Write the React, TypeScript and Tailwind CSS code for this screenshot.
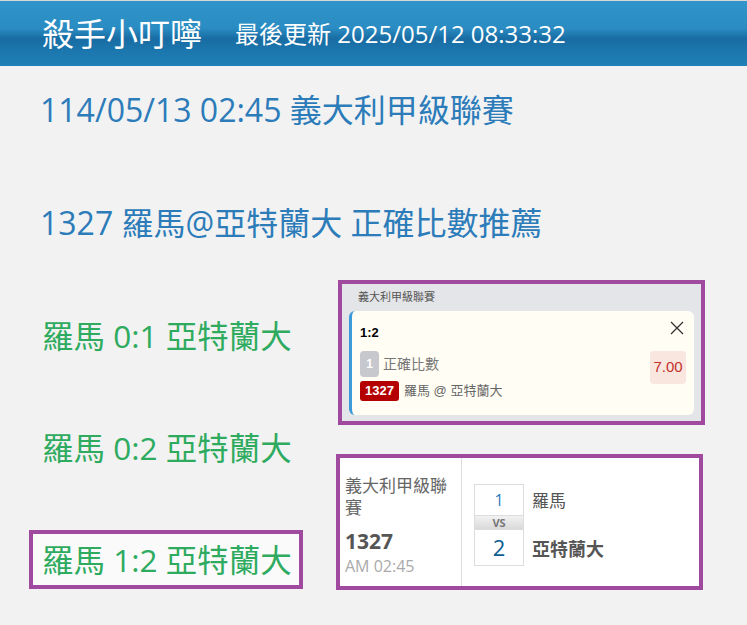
import React from "react";

const sans = { fontFamily: '"Open Sans", "Noto Sans CJK TC", sans-serif' };
const arial = { fontFamily: '"Liberation Sans", "Noto Sans CJK TC", sans-serif' };

function GreenLine({ text, active }: { text: string; active?: boolean }) {
  return (
    <div
      className={
        "h-[59px] flex items-center px-[9px] border-4 text-[31.5px] leading-none text-[#2eab5f] whitespace-nowrap " +
        (active ? "border-[#a04a9f] bg-[#fafafa]" : "border-transparent")
      }
    >
      {text}
    </div>
  );
}

export default function App() {
  return (
    <div className="w-[747px] h-[625px] overflow-hidden bg-[#f2f2f2]" style={sans}>
      <header className="h-[66px] border-t border-[#d8d8d8] bg-[linear-gradient(180deg,#2f95ca_0%,#2a8cc2_42%,#186ca3_58%,#1b76ad_75%,#2080b7_100%)] flex items-center pl-[42px] text-white">
        <div className="text-[32px] leading-none">殺手小叮嚀</div>
        <div className="ml-[33px] text-[24px] leading-none">最後更新 2025/05/12 08:33:32</div>
      </header>

      <div className="pl-[40px] pt-[24px] text-[32px] leading-[40px] text-[#2c7cba] whitespace-nowrap">
        <div>114/05/13 02:45 義大利甲級聯賽</div>
        <div className="mt-[73px]">1327 羅馬@亞特蘭大 正確比數推薦</div>
      </div>

      <div className="mt-[37px] flex items-start">
        <div className="ml-[29px] w-[274px] pt-[26px] flex flex-col gap-[53px]">
          <GreenLine text="羅馬 0:1 亞特蘭大" />
          <GreenLine text="羅馬 0:2 亞特蘭大" />
          <GreenLine text="羅馬 1:2 亞特蘭大" active />
        </div>

        <div className="ml-[33px] flex flex-col">
          {/* Bet slip card */}
          <div className="ml-[2px] w-[367px] h-[145px] border-4 border-[#a04a9f] bg-[#e4e5e8] px-[7px] pt-[6px]" style={arial}>
            <div className="pl-[9px] text-[11px] leading-[14px] text-[#555]">義大利甲級聯賽</div>
            <div className="mt-[7px] h-[104px] rounded-[6px] border-l-[3px] border-[#3b9bda] bg-[#fffdf4] pl-[8px] pr-[8px] pt-[14px] relative">
              <svg
                className="absolute right-[10px] top-[10px]"
                width="14"
                height="14"
                viewBox="0 0 14 14"
                fill="none"
                stroke="#333"
                strokeWidth="1.3"
              >
                <path d="M1 1 L13 13 M13 1 L1 13" />
              </svg>
              <div className="text-[13px] leading-[16px] font-bold text-black">1:2</div>
              <div className="mt-[10px] flex items-start justify-between">
                <div className="flex flex-col">
                  <div className="flex items-center gap-[4px]">
                    <div className="w-[19px] h-[26px] rounded-[4px] bg-[#c7c8cd] flex items-center justify-center text-white text-[12px] font-bold">
                      1
                    </div>
                    <div className="text-[14px] text-[#777]">正確比數</div>
                  </div>
                  <div className="mt-[4px] flex items-center gap-[5px]">
                    <div className="w-[39px] h-[20px] rounded-[3px] bg-[#b50000] flex items-center justify-center text-white text-[13px] font-bold">
                      1327
                    </div>
                    <div className="text-[13px] text-[#666]">羅馬 @ 亞特蘭大</div>
                  </div>
                </div>
                <div className="w-[36px] h-[33px] rounded-[4px] bg-[#f8e6df] flex items-center justify-center text-[15px] text-[#c4302b]">
                  7.00
                </div>
              </div>
            </div>
          </div>

          {/* Match card */}
          <div className="mt-[29px] w-[367px] h-[136px] border-4 border-[#a04a9f] bg-white flex">
            <div className="w-[122px] border-r border-[#ddd] pl-[5px] pr-[6px] pt-[17px]">
              <div className="text-[17px] leading-[22px] text-[#666]">義大利甲級聯賽</div>
              <div className="mt-[10px] text-[21px] leading-[24px] font-bold text-[#555]">1327</div>
              <div className="mt-[3px] text-[16px] leading-[20px] text-[#aaa]">AM 02:45</div>
            </div>
            <div className="flex items-center pl-[12px] pt-[6px]">
              <div className="w-[50px] border border-[#ddd] flex flex-col">
                <div className="h-[30px] flex items-center justify-center text-[16px] text-[#2a7dbc]">1</div>
                <div className="h-[15px] border-y border-[#ddd] bg-[linear-gradient(180deg,#f2f2f2,#d9d9d9)] flex items-center justify-center text-[11px] font-bold text-[#777] leading-none">
                  VS
                </div>
                <div className="h-[35px] flex items-center justify-center text-[22px] text-[#0c5d93]">2</div>
              </div>
              <div className="ml-[8px] flex flex-col">
                <div className="h-[36px] flex items-center text-[17px] text-[#555]">羅馬</div>
                <div className="h-[12px]" />
                <div className="h-[36px] flex items-center text-[18px] font-bold text-[#555]">亞特蘭大</div>
              </div>
            </div>
          </div>
        </div>
      </div>
    </div>
  );
}
